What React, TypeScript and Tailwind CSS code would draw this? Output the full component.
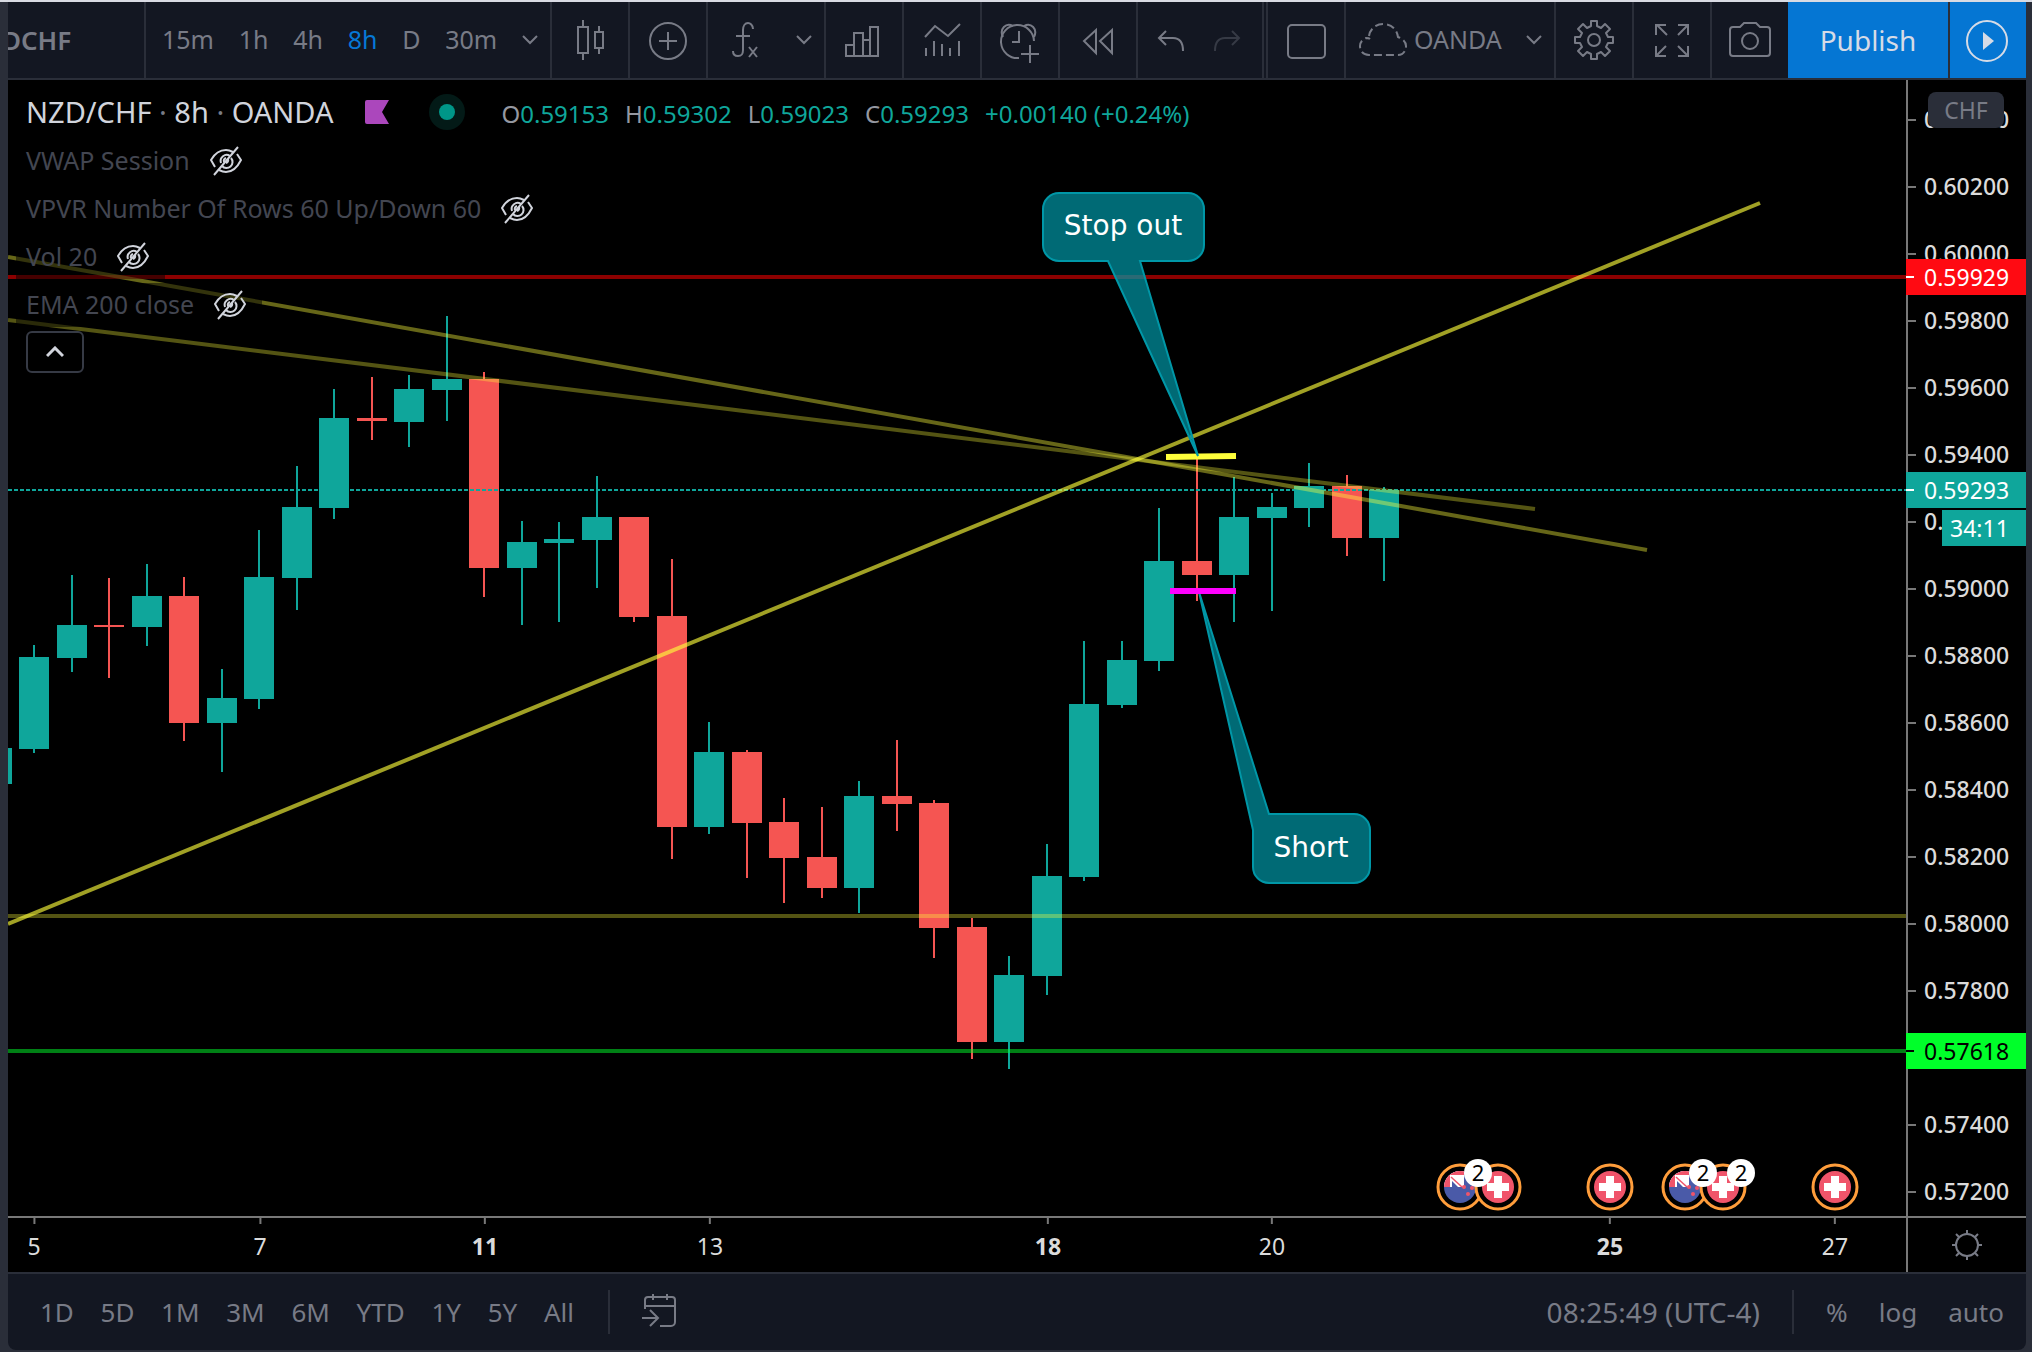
import type { ReactNode } from 'react'

const UP = '#0fa69b'
const DOWN = '#f55552'

// [high, body top, body bottom, low, up]
const candles: [number, number, number, number, number][] = [
  [748, 748, 784, 784, 1],
  [645, 657, 749, 753, 1],
  [575, 625, 658, 672, 1],
  [578, 625, 627, 678, 0],
  [564, 596, 627, 646, 1],
  [577, 596, 723, 741, 0],
  [669, 698, 723, 772, 1],
  [530, 577, 699, 709, 1],
  [466, 507, 578, 610, 1],
  [389, 418, 508, 519, 1],
  [377, 418, 421, 440, 0],
  [375, 389, 422, 447, 1],
  [316, 379, 390, 421, 1],
  [372, 379, 568, 597, 0],
  [521, 542, 568, 625, 1],
  [522, 539, 543, 622, 1],
  [476, 517, 540, 588, 1],
  [517, 517, 617, 622, 0],
  [559, 616, 827, 859, 0],
  [722, 752, 827, 834, 1],
  [750, 752, 823, 878, 0],
  [798, 822, 858, 903, 0],
  [807, 857, 888, 898, 0],
  [781, 796, 888, 913, 1],
  [740, 796, 804, 831, 0],
  [800, 803, 928, 958, 0],
  [918, 927, 1042, 1059, 0],
  [956, 975, 1042, 1069, 1],
  [844, 876, 976, 995, 1],
  [641, 704, 877, 881, 1],
  [641, 660, 705, 708, 1],
  [508, 561, 661, 671, 1],
  [455, 561, 575, 601, 0],
  [477, 517, 575, 622, 1],
  [493, 507, 518, 611, 1],
  [463, 486, 508, 527, 1],
  [475, 486, 538, 556, 0],
  [487, 490, 538, 581, 1],
]

const prices = [
  '0.60400', '0.60200', '0.60000', '0.59800', '0.59600', '0.59400', '0.59200', '0.59000', '0.58800',
  '0.58600', '0.58400', '0.58200', '0.58000', '0.57800', '0.57600', '0.57400', '0.57200',
]

const days = [
  { label: '5', x: 34 },
  { label: '7', x: 260 },
  { label: '11', x: 485, bold: true },
  { label: '13', x: 710 },
  { label: '18', x: 1048, bold: true },
  { label: '20', x: 1272 },
  { label: '25', x: 1610, bold: true },
  { label: '27', x: 1835 },
]

const events = [
  { x: 1460, nz: true, count: 2 },
  { x: 1498, nz: false },
  { x: 1610, nz: false },
  { x: 1685, nz: true, count: 2 },
  { x: 1723, nz: false, count: 2 },
  { x: 1835, nz: false },
]

const indicators = ['VWAP Session', 'VPVR Number Of Rows 60 Up/Down 60', 'Vol 20', 'EMA 200 close']

const barX = (i: number) => Math.round(34 + 37.5 * (i - 1))

function Icon({ children, className = '' }: { children: ReactNode; className?: string }) {
  return (
    <svg viewBox="0 0 56 56" fill="none" stroke="currentColor" strokeWidth="2" className={`h-14 w-14 shrink-0 ${className}`}>
      {children}
    </svg>
  )
}

function Chevron() {
  return (
    <svg viewBox="0 0 16 10" fill="none" stroke="currentColor" strokeWidth="2" className="h-[10px] w-4 shrink-0">
      <path d="M1 1l7 7 7-7" />
    </svg>
  )
}

function ToolButton({ label, children }: { label: string; children: ReactNode }) {
  return (
    <button aria-label={label} className="flex w-[78px] items-center justify-center border-r-2 border-[#2a2e39]">
      <Icon>{children}</Icon>
    </button>
  )
}

function Toolbar() {
  return (
    <header className="flex h-[78px] shrink-0 border-b-2 border-[#2a2e39] bg-[#131722] text-[25px] text-[#787b86]">
      <button className="flex w-[138px] items-center justify-start overflow-hidden border-r-2 border-[#2a2e39] text-[26px] font-semibold">
        <span className="-ml-[6px]">DCHF</span>
      </button>
      <div className="flex w-[406px] items-center justify-between border-r-2 border-[#2a2e39] pl-4 pr-3">
        <button>15m</button>
        <button>1h</button>
        <button>4h</button>
        <button className="text-[#0678d6]">8h</button>
        <button>D</button>
        <button>30m</button>
        <button aria-label="More intervals"><Chevron /></button>
      </div>
      <ToolButton label="Chart type">
        <path d="M21 8v6M21 42v6M16 15h10v26H16zM37 14v6M37 36v6M33 20h8v16h-8z" />
      </ToolButton>
      <ToolButton label="Compare">
        <circle cx="28" cy="29" r="18" />
        <path d="M28 20v18M19 29h18" />
      </ToolButton>
      <div className="flex w-[118px] items-center justify-between border-r-2 border-[#2a2e39] pl-2 pr-3">
        <button aria-label="Indicators">
          <Icon>
            <path d="M37 17c0-4-3-6-5-6-3 0-5 3-5 7v20c0 4-1 6-5 6-3 0-5-2-5-5M20 24h14M33 35l8 10M41 35l-8 10" />
          </Icon>
        </button>
        <button aria-label="Favourite indicators"><Chevron /></button>
      </div>
      <ToolButton label="Financials">
        <path d="M10 33h8v11h-8zM18 21h9v23h-9zM27 28h7v16h-7zM34 15h8v29h-8z" />
      </ToolButton>
      <ToolButton label="Templates">
        <path d="M11 25l10-11 13 10 12-12M12 36v8M20 29v15M28 32v12M36 36v8M45 29v15" />
      </ToolButton>
      <ToolButton label="Alert">
        <path d="M27 46A16.500 16.500 0 1 1 42 29" />
        <path d="M11 25c-4-8 3-15 10-11M42 25c4-8-3-15-10-11M27 19v11h-7M38 33v18M29 42h18" />
      </ToolButton>
      <ToolButton label="Replay">
        <path d="M26 18v23L14 29zM42 18v23L30 29z" />
      </ToolButton>
      <div className="flex w-[126px] items-center border-r-2 border-[#2a2e39]">
        <button aria-label="Undo">
          <Icon>
            <path d="M28 19l-7 7 7 7M21 26h14c7 0 10 5 10 13" />
          </Icon>
        </button>
        <button aria-label="Redo" className="text-[#363a45]">
          <Icon>
            <path d="M38 19l7 7-7 7M45 26H31c-7 0-10 5-10 13" />
          </Icon>
        </button>
      </div>
      <div className="ml-auto flex border-l-2 border-[#2a2e39]">
        <ToolButton label="Layout">
          <rect x="10" y="13" width="37" height="33" rx="4" />
        </ToolButton>
        <button className="flex w-[210px] items-center border-r-2 border-[#2a2e39] pr-3">
          <Icon className="ml-2">
            <path
              strokeDasharray="8 4"
              d="M15 43c-6 0-9-4-9-9 0-4 3-7 6-8 1 0 3 0 4 1M15 24c1-7 7-12 14-12 9 0 14 6 15 13 5 2 8 5 8 9 0 5-3 9-8 9H15"
            />
          </Icon>
          <span className="ml-1">OANDA</span>
          <span className="ml-auto"><Chevron /></span>
        </button>
        <ToolButton label="Settings">
          <circle cx="28" cy="28" r="6" />
          <path d="M25 9h6v5l4 2 4-4 5 5-4 4 2 4h5v6h-5l-2 4 4 4-5 5-4-4-4 2v5h-6v-5l-4-2-4 4-5-5 4-4-2-4H9v-6h5l2-4-4-4 5-5 4 4 4-2z" strokeLinejoin="round" />
        </ToolButton>
        <ToolButton label="Fullscreen">
          <path d="M12 23V13h10M13 13l10 10M34 13h10v10M44 13L34 23M12 34v10h10M12 44l10-10M44 34v10H34M44 44L34 34" />
        </ToolButton>
        <button aria-label="Snapshot" className="flex w-[76px] items-center justify-center">
          <Icon>
            <path d="M11 15h7l4-4h12l4 4h7a3 3 0 0 1 3 3v23a3 3 0 0 1-3 3H11a3 3 0 0 1-3-3V18a3 3 0 0 1 3-3z" />
            <circle cx="28" cy="29" r="8" />
          </Icon>
        </button>
        <button className="w-[162px] border-r-2 border-[#2a2e39] bg-[#0576d3] text-[28px] text-[#d6dbe6]">Publish</button>
        <button aria-label="Play" className="flex w-[76px] items-center justify-center bg-[#0576d3] text-[#d6dbe6]">
          <Icon>
            <circle cx="27" cy="29" r="20" />
            <path d="M23 20v18l11-9z" fill="currentColor" stroke="none" />
          </Icon>
        </button>
      </div>
    </header>
  )
}

function HiddenEye() {
  return (
    <svg viewBox="0 0 32 32" fill="none" stroke="#d1d4dc" strokeWidth="2" className="h-8 w-8">
      <path d="M5 22l-4-7c4-7 9-10 15-10 3 0 5 1 7 2M27 9l4 6c-4 8-9 12-15 12-3 0-5-1-7-2" />
      <path d="M20 11a6 6 0 0 0-9 7M12 21a6 6 0 0 0 9-8" />
      <path d="M16 13a3 3 0 0 0-2 4M16 18a3 3 0 0 0 2-4M28 2L4 30" />
    </svg>
  )
}

function Legend() {
  const ohlc = [
    ['O', '0.59153'],
    ['H', '0.59302'],
    ['L', '0.59023'],
    ['C', '0.59293'],
  ]
  return (
    <div className="relative flex flex-col items-start gap-1 pl-2 pt-2">
      <div className="flex h-[47px] items-center pl-[10px]">
        <h1 className="text-[29px] text-[#d1d4dc]">
          NZD/CHF <span className="text-[#787b86]">·</span> 8h <span className="text-[#787b86]">·</span> OANDA
        </h1>
        <svg viewBox="0 0 24 24" className="ml-8 h-6 w-6">
          <path d="M2 0h22l-7 12 7 12H2a2 2 0 0 1-2-2V2a2 2 0 0 1 2-2z" fill="#ab47bc" />
        </svg>
        <span className="ml-10 flex h-9 w-9 items-center justify-center rounded-full bg-[#031a17]">
          <span className="h-4 w-4 rounded-full bg-[#009688]" />
        </span>
        <div className="ml-9 flex gap-4 pt-1 text-2xl text-[#0fa69b]">
          {ohlc.map(([key, value]) => (
            <span key={key}>
              <span className="text-[#9598a1]">{key}</span>
              {value}
            </span>
          ))}
          <span>+0.00140 (+0.24%)</span>
        </div>
      </div>
      {indicators.map((name) => (
        <div key={name} className="flex h-11 items-center gap-5 bg-black/50 pl-[10px] pr-4 text-[25px] text-[#434651]">
          {name}
          <button aria-label={`Show ${name}`}><HiddenEye /></button>
        </div>
      ))}
      <button aria-label="Collapse legend" className="ml-[10px] flex h-[42px] w-[58px] items-center justify-center rounded-md border-2 border-[#363a45]">
        <svg viewBox="0 0 18 12" fill="none" stroke="#d1d4dc" strokeWidth="3" className="h-3 w-[18px]">
          <path d="M1 10l8-8 8 8" />
        </svg>
      </button>
    </div>
  )
}

function Flag({ x, nz }: { x: number; nz: boolean }) {
  return (
    <g transform={`translate(${x} 1187)`}>
      <circle r="22" fill="#000" stroke="#ff9d3b" strokeWidth="3" />
      {nz ? (
        <g clipPath="url(#flag)">
          <rect x="-16" y="-16" width="32" height="32" fill="#4a5aa8" />
          <path d="M-16-16H4V0h-20z" fill="#fff" />
          <path d="M-16-16H4v4h-20zM-16-16h6V0h-6z" fill="#f0546a" />
          <path d="M-8 0v-6l6 6z" fill="#4a5aa8" />
          <path d="M-9-10L2 0" stroke="#f0546a" strokeWidth="1.500" />
          <g fill="#f0546a">
            <circle cx="4" cy="0" r="2" />
            <circle cx="12" cy="1" r="2" />
            <circle cx="8" cy="7" r="2" />
          </g>
        </g>
      ) : (
        <>
          <circle r="16" fill="#f0546a" />
          <path d="M-4-11h8v7h7v8H4v7h-8V4h-7v-8h7z" fill="#fff" />
        </>
      )}
    </g>
  )
}

function Chart() {
  return (
    <svg viewBox="8 80 1898 1136" preserveAspectRatio="none" className="absolute inset-0 h-full w-full">
      <defs>
        <clipPath id="flag">
          <circle r="16" />
        </clipPath>
      </defs>

      {candles.map(([high, top, bottom, low, up], i) => (
        <g key={i} fill={up ? UP : DOWN}>
          <rect x={barX(i) - 1} y={high} width="2" height={low - high} />
          <rect x={barX(i) - 15} y={top} width="30" height={bottom - top} />
        </g>
      ))}
      <path d="M8 490H1906" stroke={UP} strokeWidth="2" strokeDasharray="4 2" />

      {/* Horizontal levels */}
      <path d="M8 277H1906" stroke="#ff0000" strokeOpacity="0.55" strokeWidth="4" />
      <path d="M8 916H1906" stroke="#ffff3b" strokeOpacity="0.33" strokeWidth="4" />
      <path d="M8 1051H1906" stroke="#00ff2a" strokeOpacity="0.5" strokeWidth="4" />

      {/* Trend lines */}
      <g stroke="#ffff3b" strokeWidth="4">
        <path d="M8 924L1760 203" strokeOpacity="0.63" />
        <path d="M8 257L1647 550" strokeOpacity="0.4" />
        <path d="M8 320L1535 509" strokeOpacity="0.33" />
      </g>

      <path d="M1166 457L1236 456" stroke="#ffff3b" strokeWidth="6" />

      {/* Callouts */}
      <g fill="#0097a7" fillOpacity="0.7" stroke="#0097a7" strokeWidth="2">
        <path d="M1059 193H1188a16 16 0 0 1 16 16V245a16 16 0 0 1-16 16H1140L1198 456L1108 261H1059a16 16 0 0 1-16-16V209a16 16 0 0 1 16-16z" />
        <path d="M1269 814H1354a16 16 0 0 1 16 16V867a16 16 0 0 1-16 16H1269a16 16 0 0 1-16-16V830L1199 592z" />
      </g>
      <g fill="#fff" textAnchor="middle" className="font-['DejaVu_Sans'] text-[28px]">
        <text x="1123" y="235">Stop out</text>
        <text x="1311" y="857">Short</text>
      </g>
      <path d="M1170 591H1236" stroke="#ff00ff" strokeWidth="6" />

      {/* Economic events */}
      {events.map((e) => (
        <Flag key={e.x} x={e.x} nz={e.nz} />
      ))}
      {events.filter((e) => e.count).map((e) => (
        <g key={e.x}>
          <circle cx={e.x + 18} cy="1173" r="14" fill="#fff" />
          <text x={e.x + 18} y="1181" textAnchor="middle" className="text-[22px]">{e.count}</text>
        </g>
      ))}
    </svg>
  )
}

function PriceAxis() {
  return (
    <div className="relative w-[120px] shrink-0 overflow-hidden border-l-2 border-[#787878] pt-[6px] text-[23px] font-medium text-[#dbdbdb]">
      {prices.map((price) => (
        <div key={price} className="flex h-[67px] items-center gap-2">
          <span className="h-[2px] w-2 bg-[#787878]" />
          {price}
        </div>
      ))}
      <button className="absolute left-5 top-3 h-9 w-[76px] rounded-lg bg-[#2a2e39] font-normal text-[#787b86]">CHF</button>
    </div>
  )
}

function PriceTag({ price, className }: { price: string; className: string }) {
  return (
    <div className={`absolute right-0 flex h-9 w-[120px] items-center gap-[10px] text-[23px] ${className}`}>
      <span className="h-[2px] w-2 bg-current" />
      {price}
    </div>
  )
}

function TimeAxis() {
  return (
    <div className="flex h-14 shrink-0 border-t-2 border-[#787878] text-[23px] text-[#dbdbdb]">
      <div className="relative flex-1">
        {days.map((day) => (
          <div
            key={day.label}
            className="absolute top-0 flex -translate-x-1/2 flex-col items-center gap-[6px]"
            style={{ left: `${((day.x - 8) / 1898) * 100}%` }}
          >
            <span className="h-[6px] w-[2px] bg-[#787878]" />
            <span className={day.bold ? 'font-bold leading-8' : 'leading-8'}>{day.label}</span>
          </div>
        ))}
      </div>
      <button aria-label="Axis settings" className="flex w-[120px] items-center justify-center border-l-2 border-[#787878] text-[#787b86]">
        <svg viewBox="0 0 32 32" fill="none" stroke="currentColor" strokeWidth="2" className="h-8 w-8">
          <circle cx="16" cy="16" r="11" />
          <path d="M16 1v4M16 27v4M1 16h4M27 16h4M5 5l3 3M24 24l3 3M5 27l3-3M24 8l3-3" />
        </svg>
      </button>
    </div>
  )
}

function BottomBar() {
  return (
    <footer className="flex h-[78px] shrink-0 items-center rounded-b-lg border-t-2 border-[#2a2e39] bg-[#131722] px-[22px] text-[26px] text-[#787b86]">
      <div className="flex w-[544px] justify-between pl-[10px]">
        {['1D', '5D', '1M', '3M', '6M', 'YTD', '1Y', '5Y', 'All'].map((range) => (
          <button key={range}>{range}</button>
        ))}
      </div>
      <span className="ml-[34px] h-11 w-[2px] bg-[#2a2e39]" />
      <button aria-label="Go to date" className="ml-5">
        <Icon>
          <path d="M15 25V16a3 3 0 0 1 3-3h24a3 3 0 0 1 3 3v22a4 4 0 0 1-4 4H30M15 22h30M23 10v6M37 10v6M12 34h15M20 26l8 8-8 8" />
        </Icon>
      </button>
      <button className="ml-auto text-[28px]">08:25:49 (UTC-4)</button>
      <span className="ml-8 h-11 w-[2px] bg-[#2a2e39]" />
      <div className="ml-8 flex w-[178px] justify-between">
        <button>%</button>
        <button>log</button>
        <button>auto</button>
      </div>
    </footer>
  )
}

export default function App() {
  return (
    <div className="flex h-screen flex-col overflow-hidden border-t-2 border-t-[#d9dbe3] bg-[#2a2e39] pb-[2px] pl-2 pr-[6px] font-['Noto_Sans',sans-serif]">
      <Toolbar />
      <main className="flex min-h-0 flex-1 flex-col bg-black">
        <div className="relative flex min-h-0 flex-1">
          <div className="relative flex-1">
            <Chart />
            <Legend />
          </div>
          <PriceAxis />
          <PriceTag price="0.59929" className="top-[179px] bg-[#ff0a12] text-white" />
          <PriceTag price="0.59293" className="top-[392px] bg-[#0fa69b] text-white" />
          <div className="absolute right-0 top-[430px] flex h-9 w-[84px] items-center bg-[#0fa69b] pl-2 text-[23px] text-white">34:11</div>
          <PriceTag price="0.57618" className="top-[953px] bg-[#00ff2a] text-black" />
        </div>
        <TimeAxis />
      </main>
      <BottomBar />
    </div>
  )
}
